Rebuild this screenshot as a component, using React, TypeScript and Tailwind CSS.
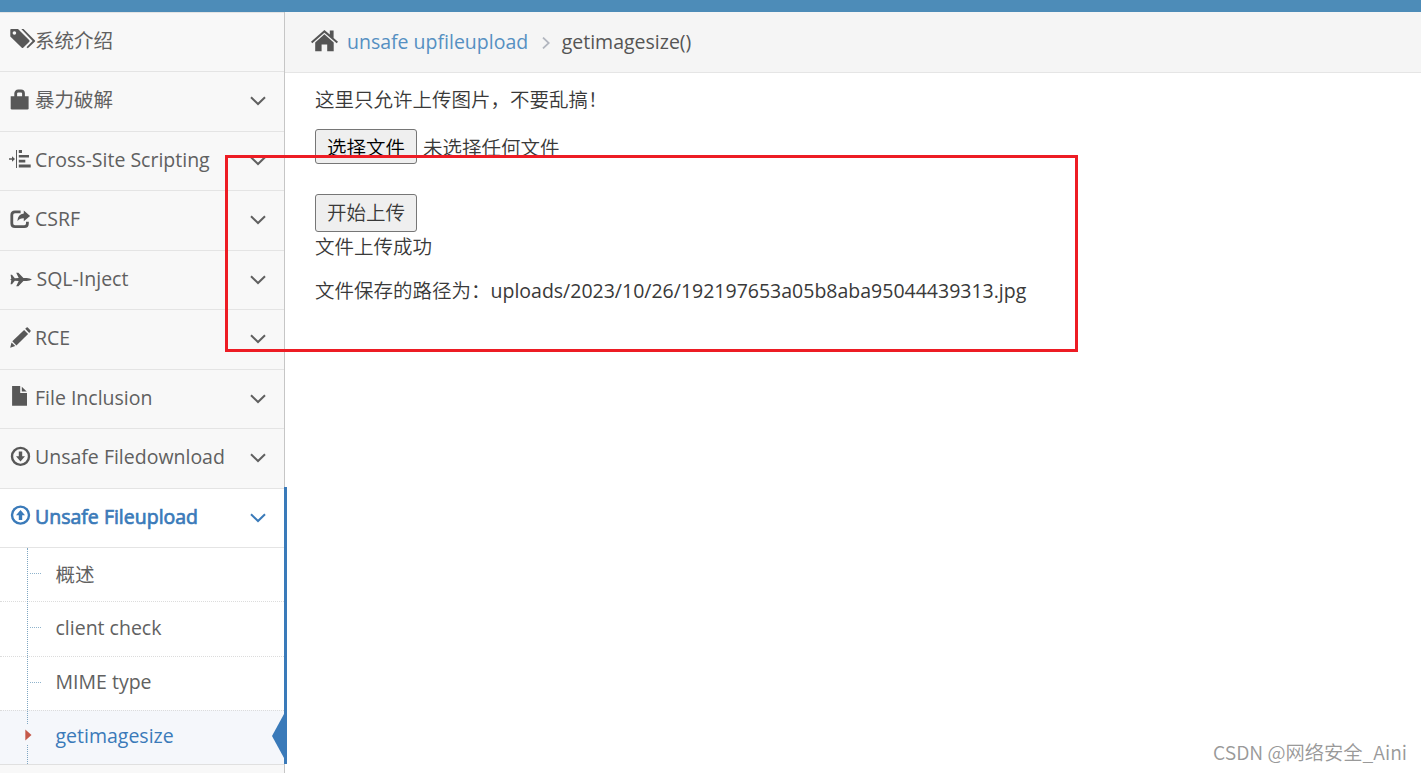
import type { ReactNode } from 'react';

interface MenuItem {
  label: string;
  icon: ReactNode;
  expandable?: boolean;
  active?: boolean;
}

const menu: MenuItem[] = [
  {
    label: '系统介绍',
    icon: (
      <>
        <path
          fillRule="evenodd"
          d="M10.3 1.8Q10.3 1 11.1 1H18L29.3 12.3Q30 13 29.3 13.7L23.2 19.8Q22.5 20.4 21.8 19.8L10.3 8.6ZM14.4 3.2a1.8 1.8 0 1 0 0 3.6a1.8 1.8 0 1 0 0-3.6Z"
        />
        <path d="M21.3 1h2.2L35 12.6Q35.3 13 35 13.4L27.8 20.3L26.5 19.2L32.6 13Z" />
      </>
    ),
  },
  {
    label: '暴力破解',
    expandable: true,
    icon: (
      <>
        <path d="M15.7 9V5.6Q15.7 3 18.3 3H21Q23.5 3 23.5 5.6V9" fill="none" stroke="currentColor" strokeWidth="2.8" />
        <path d="M10.7 8.3H28.6V20.2Q28.6 21.4 27.4 21.4H11.9Q10.7 21.4 10.7 20.2Z" />
      </>
    ),
  },
  {
    label: 'Cross-Site Scripting',
    expandable: true,
    icon: (
      <>
        <path d="M9 11.3H12V9.2L15 12L12 14.8V12.7H9Z" />
        <path d="M16 3H17V21H16ZM18.8 3H22V6H18.8ZM18.8 8H29V10.5H18.8ZM18.8 12.8H25.3V15.4H18.8ZM18.8 17.4H30.7V20.6H18.8Z" />
      </>
    ),
  },
  {
    label: 'CSRF',
    expandable: true,
    icon: (
      <>
        <path
          d="M20.6 4.9H15Q11.8 4.9 11.8 8V16.6Q11.8 19.7 15 19.7H24.3Q27.4 19.7 27.4 16.6V14.8"
          fill="none"
          stroke="currentColor"
          strokeWidth="2.8"
        />
        <path d="M23.8 3.4L30.1 8.9L23.8 14.2V11.2Q19.6 11 17.4 14.2Q17.7 7.3 23.8 6.6Z" />
      </>
    ),
  },
  {
    label: 'SQL-Inject',
    expandable: true,
    icon: (
      <path d="M10.6 8.8H12L14.8 12.2L18.7 12L16.2 6.8H18.4L23.4 12H26.6Q30 12.3 32 13.5Q30 14.7 26.6 15H23.4L18.4 20.2H16.2L18.7 15L14.8 14.8L12 18.2H10.6L11.3 14.2L10.2 13.5L11.3 12.8Z" />
    ),
  },
  {
    label: 'RCE',
    expandable: true,
    icon: (
      <>
        <path d="M25.2 2.7L26.6 1.5Q27.2 1 27.8 1.6L30.6 4.4Q31.1 5 30.5 5.6L29.2 6.9Z" />
        <path d="M24.1 3.9L28.1 8L16.4 19.4L12.3 15.3Z" />
        <path d="M11.5 16.4L15.3 20L10.2 21.7Z" />
      </>
    ),
  },
  {
    label: 'File Inclusion',
    expandable: true,
    icon: (
      <>
        <path d="M12.1 0.9H20.2V7.9H27V20.7H12.1Z" />
        <path d="M21.8 1.7L26.7 6.6H21.8Z" />
      </>
    ),
  },
  {
    label: 'Unsafe Filedownload',
    expandable: true,
    icon: (
      <>
        <circle cx="20.5" cy="11.4" r="8.5" fill="none" stroke="currentColor" strokeWidth="2.4" />
        <path d="M18.8 6.4H22.2V11.2H25L20.5 16.6L16 11.2H18.8Z" />
      </>
    ),
  },
  {
    label: 'Unsafe Fileupload',
    expandable: true,
    active: true,
    icon: (
      <>
        <circle cx="20.5" cy="11.1" r="8.5" fill="none" stroke="currentColor" strokeWidth="2.4" />
        <path d="M18.8 16.1H22.2V11.3H25L20.5 5.9L16 11.3H18.8Z" />
      </>
    ),
  },
];

const submenu = ['概述', 'client check', 'MIME type', 'getimagesize'];

function Sidebar() {
  return (
    <aside className="w-[285px] shrink-0 border-r border-[#c6c6c6] bg-[#f8f8f8] text-[#606060]">
      <ul>
        {menu.map((item) => (
          <li
            key={item.label}
            className={
              item.active
                ? 'relative flex h-[59.5px] items-center border-t border-[#e4e4e4] bg-white pl-2 text-[#3a7ab9]'
                : 'flex h-[59.5px] items-center border-t border-[#e4e4e4] pl-2'
            }
          >
            <svg
              viewBox="8 0 27 28"
              className={item.active ? 'h-7 w-[27px] shrink-0 overflow-visible' : 'h-7 w-[27px] shrink-0 overflow-visible text-[#585858]'}
              fill="currentColor"
            >
              {item.icon}
            </svg>
            <span
              className={
                item.active
                  ? 'grow pb-[3.5px] whitespace-nowrap [-webkit-text-stroke:0.7px_#3a7ab9]'
                  : item.label === 'SQL-Inject'
                    ? 'grow pb-[3.5px] pl-[1.5px] whitespace-nowrap'
                    : 'grow pb-[3.5px] whitespace-nowrap'
              }
            >
              {item.label}
            </span>
            {item.expandable && (
              <svg viewBox="0 0 16 10" className="mr-[18px] mb-px h-2.5 w-4 shrink-0" fill="none" stroke="currentColor" strokeWidth="2">
                <path d="M1 1.2L8 8L15 1.2" />
              </svg>
            )}
          </li>
        ))}
      </ul>
      <ul className="relative border-t border-[#e4e4e4] bg-white">
        {submenu.map((label, i) => {
          const current = label === 'getimagesize';
          return (
            <li
              key={label}
              className={
                current
                  ? 'relative flex h-[54.2px] items-center border-t border-dotted border-[#dcdcdc] bg-[#f5f7fb] pb-[5px] pl-[55.5px] text-[#3a7ab9]'
                  : i === 0
                    ? 'relative flex h-[53px] items-center pb-px pl-[55.5px] text-[#616161]'
                    : 'relative flex h-[54.4px] items-center border-t border-dotted border-[#dcdcdc] pb-[3px] pl-[55.5px] text-[#616161]'
              }
            >
              {!current && <i className="absolute top-[25px] left-[30px] w-[11px] border-t border-dotted border-[#8fb3cc]" />}
              {label}
              {current && (
                <svg viewBox="0 0 12 44" className="absolute top-[3px] right-0 h-11 w-3" fill="#3a7ab9">
                  <path d="M12 0V44L0 22Z" />
                </svg>
              )}
            </li>
          );
        })}
        <i className="absolute inset-y-0 left-[27px] border-l border-dotted border-[#7fa6c2]" />
        <svg viewBox="0 0 8 20" className="absolute bottom-[19px] left-[25px] h-5 w-2">
          <path d="M0 0H8V20H0Z" fill="#f5f7fb" />
          <path d="M0.3 4.5L6.5 10L0.3 15.5Z" fill="#c5594a" />
        </svg>
        <i className="absolute -top-[61px] -right-[3px] bottom-0 w-[3px] bg-[#3a7ab9]" />
      </ul>
      <div className="h-3 border-t border-[#e0e0e0]" />
    </aside>
  );
}

function Breadcrumb() {
  return (
    <div className="flex h-[61px] items-center border-b border-[#e5e5e5] bg-[#f5f5f5] pl-[26px] text-[#555]">
      <svg viewBox="0 0 27 22" className="mr-[9px] mb-px h-[22px] w-[27px]" fill="currentColor">
        <path d="M13.4 0L18.8 4.6V0.6H22.6V8L27 11.8L25.7 13.3L13.4 2.7L1.3 13.3L0 11.8Z" />
        <path d="M13.4 4.3L22.7 12.4V21.3H16.2V14.5H10.6V21.3H4.2V12.4Z" />
      </svg>
      <a className="text-[#5590c2]">unsafe upfileupload</a>
      <svg viewBox="0 0 8 12" className="mt-0.5 mr-3 ml-[13.5px] h-3 w-2" fill="none" stroke="#b2b6bf" strokeWidth="1.8">
        <path d="M1 0.6L6.8 6L1 11.4" />
      </svg>
      <span>getimagesize()</span>
    </div>
  );
}

export default function App() {
  return (
    <div className="relative h-[773px] w-[1421px] overflow-hidden bg-white font-['Open_Sans','Noto_Sans_CJK_SC',sans-serif] text-[19.5px] leading-[29px] text-[#393939]">
      <header className="h-[11.9px] bg-[#4d8cb8]" />
      <div className="flex h-[762px]">
        <Sidebar />
        <main className="grow">
          <Breadcrumb />
          <div className="pl-[30px] font-[350]">
            <p className="pt-3">这里只允许上传图片，不要乱搞！</p>
            <div className="mt-[15px] flex h-[35px] items-center">
              <button className="h-[35px] w-[102px] rounded-[3px] border border-[#767676] bg-[#efefef] pt-0.5 text-black">选择文件</button>
              <span className="ml-1.5 pt-0.5">未选择任何文件</span>
            </div>
            <button className="mt-[30px] block h-[38px] w-[102px] rounded-[3px] border border-[#767676] bg-[#efefef]">
              开始上传
            </button>
            <p>文件上传成功</p>
            <p className="mt-[15px]">
              文件保存的路径为：<span className="font-normal">uploads/2023/10/26/192197653a05b8aba95044439313.jpg</span>
            </p>
          </div>
        </main>
      </div>
      <div className="absolute top-[155px] left-[225px] h-[197px] w-[853px] border-3 border-[#ed1c24]" />
      <div className="absolute right-3.5 bottom-1.5 font-['Noto_Sans_CJK_SC',sans-serif] text-[19.3px] font-[350] text-[#999]">
        CSDN @网络安全_Aini
      </div>
    </div>
  );
}
